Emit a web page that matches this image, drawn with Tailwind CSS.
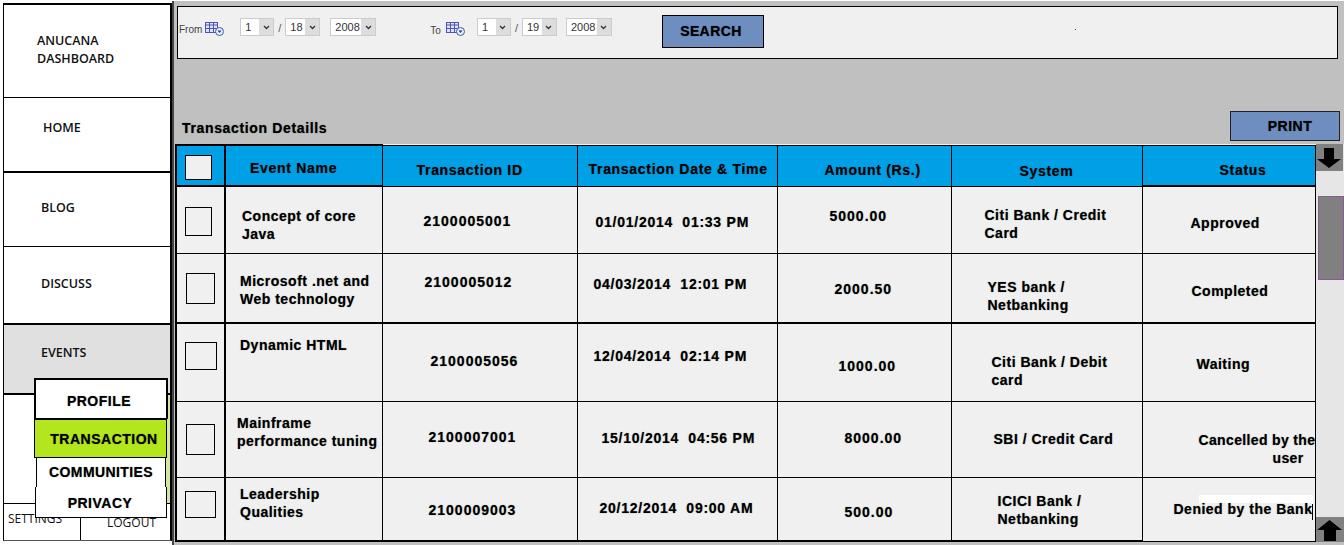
<!DOCTYPE html>
<html>
<head>
<meta charset="utf-8">
<script src="https://cdn.jsdelivr.net/npm/@tailwindcss/browser@4"></script>
<title>Transaction Details</title>
</head>
<body class="bg-white">
<div class="relative flex w-[1344px] h-[545px] overflow-hidden bg-white font-['Liberation_Sans',sans-serif] text-black">

    <!-- Sidebar -->
    <aside class="w-[172px] h-[545px] shrink-0 pt-[3px] pl-[3px] pb-[4px] font-['Open_Sans',sans-serif] text-[12.5px] font-semibold text-[#111]">
        <div class="flex flex-col h-[538px] border-l border-t-2 border-r-2 border-b border-black border-b-[#555]">
            <div class="h-[93px] border-b border-black pl-[33px] pt-[27px] leading-[18px]">ANUCANA<br>DASHBOARD</div>
            <div class="h-[75px] border-b-2 border-black pl-[39px] pt-[21px] leading-[18px]">HOME</div>
            <div class="h-[74px] border-b border-black pl-[37px] pt-[26px] leading-[18px]">BLOG</div>
            <div class="h-[78px] border-b-2 border-black pl-[37px] pt-[28px] leading-[18px]">DISCUSS</div>
            <div class="h-[70px] border-b-2 border-black bg-[#e0e0e0] pl-[37px] pt-[19px] leading-[18px]">EVENTS</div>
            <div class="h-[109px] border-b border-black"></div>
            <div class="flex flex-1 font-normal text-[12px]">
                <div class="w-[77px] border-r border-black pl-[4px] pt-[6px] leading-[18px]">SETTINGS</div>
                <div class="flex-1 pl-[26px] pt-[10px] leading-[18px]">LOGOUT</div>
            </div>
        </div>
    </aside>

    <!-- Main -->
    <main class="flex flex-col w-[1172px] h-[545px] mt-[1px] bg-[#c0c0c0] border-l-2 border-[#444] pl-[1px]">
        <div class="relative flex items-start w-[1161px] h-[53px] mt-[5px] ml-[2px] border border-black bg-[#f0f0f0] text-[11px] text-[#333]">
            <span class="ml-[1px] mt-[16px] text-[10px] leading-[14px] text-[#444]">From</span>
            <svg class="ml-[3px] mt-[14px]" width="19" height="16" viewBox="0 0 19 16">
                <rect x="0.5" y="1.5" width="12" height="10" fill="#dfe3f5" stroke="#4a57b5"/>
                <path d="M0 4h13M4.500 2v9M8.500 2v9M1 7.500h11" stroke="#4a57b5" fill="none"/>
                <circle cx="14.500" cy="10.500" r="4" fill="#e8edf8" stroke="#3a5fb0"/>
                <path d="M12.500 9.500h4l-2 2.500z" fill="#1d3f8f"/>
            </svg>
            <!-- from date -->
            <div class="flex items-center w-[34px] h-[18px] ml-[16px] mt-[11px] border border-[#ccc] bg-white"><span class="flex-1 pl-[4px]">1</span><span class="flex items-center justify-center w-[14px] h-full bg-[#ddd]"><svg width="7" height="5" viewBox="0 0 7 5"><path d="M1 1l2.500 2.500L6 1" stroke="#333" stroke-width="1.300" fill="none"/></svg></span></div>
            <span class="w-[11px] mt-[13px] text-center text-[#555]">/</span>
            <div class="flex items-center w-[35px] h-[18px] mt-[11px] border border-[#ccc] bg-white"><span class="flex-1 pl-[4px]">18</span><span class="flex items-center justify-center w-[14px] h-full bg-[#ddd]"><svg width="7" height="5" viewBox="0 0 7 5"><path d="M1 1l2.500 2.500L6 1" stroke="#333" stroke-width="1.300" fill="none"/></svg></span></div>
            <div class="flex items-center w-[46px] h-[18px] ml-[10px] mt-[11px] border border-[#ccc] bg-white"><span class="flex-1 pl-[4px]">2008</span><span class="flex items-center justify-center w-[14px] h-full bg-[#ddd]"><svg width="7" height="5" viewBox="0 0 7 5"><path d="M1 1l2.500 2.500L6 1" stroke="#333" stroke-width="1.300" fill="none"/></svg></span></div>
            <span class="ml-[54px] mt-[17px] text-[10px] leading-[14px] text-[#444]">To</span>
            <svg class="ml-[5px] mt-[14px]" width="19" height="16" viewBox="0 0 19 16">
                <rect x="0.5" y="1.5" width="12" height="10" fill="#dfe3f5" stroke="#4a57b5"/>
                <path d="M0 4h13M4.500 2v9M8.500 2v9M1 7.500h11" stroke="#4a57b5" fill="none"/>
                <circle cx="14.500" cy="10.500" r="4" fill="#e8edf8" stroke="#3a5fb0"/>
                <path d="M12.500 9.500h4l-2 2.500z" fill="#1d3f8f"/>
            </svg>
            <!-- to date -->
            <div class="flex items-center w-[34px] h-[18px] ml-[12px] mt-[11px] border border-[#ccc] bg-white"><span class="flex-1 pl-[4px]">1</span><span class="flex items-center justify-center w-[14px] h-full bg-[#ddd]"><svg width="7" height="5" viewBox="0 0 7 5"><path d="M1 1l2.500 2.500L6 1" stroke="#333" stroke-width="1.300" fill="none"/></svg></span></div>
            <span class="w-[11px] mt-[13px] text-center text-[#555]">/</span>
            <div class="flex items-center w-[35px] h-[18px] mt-[11px] border border-[#ccc] bg-white"><span class="flex-1 pl-[4px]">19</span><span class="flex items-center justify-center w-[14px] h-full bg-[#ddd]"><svg width="7" height="5" viewBox="0 0 7 5"><path d="M1 1l2.500 2.500L6 1" stroke="#333" stroke-width="1.300" fill="none"/></svg></span></div>
            <div class="flex items-center w-[46px] h-[18px] ml-[9px] mt-[11px] border border-[#ccc] bg-white"><span class="flex-1 pl-[4px]">2008</span><span class="flex items-center justify-center w-[14px] h-full bg-[#ddd]"><svg width="7" height="5" viewBox="0 0 7 5"><path d="M1 1l2.500 2.500L6 1" stroke="#333" stroke-width="1.300" fill="none"/></svg></span></div>
            <button class="w-[102px] h-[33px] ml-[50px] mt-[8px] border border-black bg-[#6d8ebf] pr-[4px] text-[14px] font-bold tracking-[0.4px] text-black [text-shadow:0_0_1px_rgba(0,0,0,0.6)]">SEARCH</button>
            <span class="w-[1px] h-[1px] ml-[311px] mt-[22px] bg-[#444]"></span>
        </div>

        <div class="flex items-start h-[85px]">
            <div class="ml-[7px] mt-[60px] text-[14px] font-bold tracking-[0.65px] leading-[18px] [text-shadow:0_0_1px_rgba(0,0,0,0.6)]">Transaction Detaills</div>
            <button class="w-[110px] h-[30px] ml-auto mr-[4px] mt-[52px] border border-[#222] bg-[#6d8ebf] pl-[10px] text-[14px] font-bold tracking-[0.5px] [text-shadow:0_0_1px_rgba(0,0,0,0.6)]">PRINT</button>
        </div>

        <div class="flex">
            <table class="w-[1139px] table-fixed border-collapse text-[14px] font-bold tracking-[0.5px] leading-[18px] bg-[#f0f0f0] [text-shadow:0_0_1px_rgba(0,0,0,0.5)]">
                <colgroup>
                    <col class="w-[49px]"><col class="w-[157px]"><col class="w-[195px]"><col class="w-[200px]"><col class="w-[174px]"><col class="w-[191px]"><col class="w-[173px]">
                </colgroup>
                <thead class="tracking-[0.7px]">
                    <tr class="h-[41px] bg-[#00a0e6] text-left">
                        <th class="border-2 border-black pl-[8px] align-top pt-[9px]"><div class="w-[27px] h-[25px] border border-black bg-[#f0f0f0]"></div></th>
                        <th class="border-2 border-black border-r-1 align-top font-bold pl-[24px] pt-[13px]">Event Name</th>
                        <th class="border border-black align-top font-bold pl-[34px] pt-[15px]">Transaction ID</th>
                        <th class="border border-black align-top font-bold pl-[11px] pt-[14px] whitespace-nowrap">Transaction Date &amp; Time</th>
                        <th class="border border-black align-top font-bold pl-[47px] pt-[15px]">Amount (Rs.)</th>
                        <th class="border border-black align-top font-bold pl-[68px] pt-[16px]">System</th>
                        <th class="border border-black border-b-2 align-top font-bold pl-[77px] pt-[15px]">Status</th>
                    </tr>
                </thead>
                <tbody>
                    <tr class="h-[67px]">
                        <td class="border border-x-2 border-black align-top pl-[8px] pt-[20px]"><div class="w-[27px] h-[29px] border border-black"></div></td>
                        <td class="border border-l-2 border-black align-top pl-[16px] pt-[20px]">Concept of core<br>Java</td>
                        <td class="border border-black align-top pl-[41px] pt-[25px] tracking-[1px]">2100005001</td>
                        <td class="border border-black align-top pl-[18px] pt-[26px] tracking-[0.75px] whitespace-nowrap">01/01/2014&nbsp; 01:33 PM</td>
                        <td class="border border-black align-top pl-[52px] pt-[20px] tracking-[1px]">5000.00</td>
                        <td class="border border-black align-top pl-[33px] pt-[19px]">Citi Bank / Credit<br>Card</td>
                        <td class="border border-black align-top pl-[48px] pt-[27px]">Approved</td>
                    </tr>
                    <tr class="h-[69px]">
                        <td class="border border-x-2 border-b-2 border-black align-top pl-[9px] pt-[19px]"><div class="w-[29px] h-[31px] border border-black"></div></td>
                        <td class="border border-l-2 border-b-2 border-black align-top pl-[14px] pt-[18px]">Microsoft .net and<br>Web technology</td>
                        <td class="border border-b-2 border-black align-top pl-[42px] pt-[19px] tracking-[1px]">2100005012</td>
                        <td class="border border-b-2 border-black align-top pl-[16px] pt-[21px] tracking-[0.75px] whitespace-nowrap">04/03/2014&nbsp; 12:01 PM</td>
                        <td class="border border-b-2 border-black align-top pl-[57px] pt-[26px] tracking-[1px]">2000.50</td>
                        <td class="border border-b-2 border-black align-top pl-[36px] pt-[24px]">YES bank /<br>Netbanking</td>
                        <td class="border border-b-2 border-black align-top pl-[49px] pt-[28px]">Completed</td>
                    </tr>
                    <tr class="h-[78px]">
                        <td class="border border-x-2 border-black align-top pl-[8px] pt-[18px]"><div class="w-[32px] h-[28px] border border-black"></div></td>
                        <td class="border border-l-2 border-black align-top pl-[14px] pt-[12px]">Dynamic HTML</td>
                        <td class="border border-black align-top pl-[48px] pt-[28px] tracking-[1px]">2100005056</td>
                        <td class="border border-black align-top pl-[16px] pt-[23px] tracking-[0.75px] whitespace-nowrap">12/04/2014&nbsp; 02:14 PM</td>
                        <td class="border border-black align-top pl-[61px] pt-[33px] tracking-[1px]">1000.00</td>
                        <td class="border border-black align-top pl-[40px] pt-[29px]">Citi Bank / Debit<br>card</td>
                        <td class="border border-black align-top pl-[54px] pt-[31px]">Waiting</td>
                    </tr>
                    <tr class="h-[75px]">
                        <td class="border border-x-2 border-black align-top pl-[9px] pt-[22px]"><div class="w-[29px] h-[31px] border border-black"></div></td>
                        <td class="border border-l-2 border-black align-top pl-[11px] pt-[12px] whitespace-nowrap">Mainframe<br>performance tuning</td>
                        <td class="border border-black align-top pl-[46px] pt-[26px] tracking-[1px]">2100007001</td>
                        <td class="border border-black align-top pl-[24px] pt-[27px] tracking-[0.75px] whitespace-nowrap">15/10/2014&nbsp; 04:56 PM</td>
                        <td class="border border-black align-top pl-[67px] pt-[27px] tracking-[1px]">8000.00</td>
                        <td class="border border-black align-top pl-[42px] pt-[28px] whitespace-nowrap">SBI / Credit Card</td>
                        <td class="border border-black align-top pl-[56px] pt-[29px] tracking-[0.35px] whitespace-nowrap">Cancelled by the<br><span class="pl-[74px]">user</span></td>
                    </tr>
                    <tr class="h-[63px]">
                        <td class="border border-x-2 border-b-2 border-black align-top pl-[8px] pt-[13px]"><div class="w-[31px] h-[27px] border border-black"></div></td>
                        <td class="border border-l-2 border-b-2 border-black align-top pl-[14px] pt-[7px]">Leadership<br>Qualities</td>
                        <td class="border border-b-2 border-black align-top pl-[46px] pt-[23px] tracking-[1px]">2100009003</td>
                        <td class="border border-b-2 border-black align-top pl-[22px] pt-[21px] tracking-[0.75px] whitespace-nowrap">20/12/2014&nbsp; 09:00 AM</td>
                        <td class="border border-b-2 border-black align-top pl-[67px] pt-[25px] tracking-[1px]">500.00</td>
                        <td class="border border-b-2 border-black align-top pl-[46px] pt-[14px]">ICICI Bank /<br>Netbanking</td>
                        <td class="relative border border-black align-top pl-[31px] pt-[22px] whitespace-nowrap">
                            <span class="absolute left-[56px] right-[2px] top-[17px] h-[8px] bg-white"></span>
                            <span class="relative">Denied by the Bank</span>
                            <span class="absolute right-[2px] top-[26px] w-[1px] h-[16px] bg-black"></span>
                        </td>
                    </tr>
                </tbody>
            </table>

            <!-- Scrollbar -->
            <div class="flex flex-col w-[28px] h-[398px] bg-[#e6e6e6]">
                <div class="flex items-center justify-center w-[27px] h-[27px] bg-[#808080]">
                    <svg width="26" height="22" viewBox="0 0 26 22"><path d="M8 1h10v11h7L13 21 1 12h7z" fill="#000"/></svg>
                </div>
                <div class="w-[26px] h-[84px] mt-[25px] ml-[2px] border border-[#8a5a94] bg-[#808080]"></div>
                <div class="flex items-center justify-center w-[28px] h-[25px] mt-[237px] bg-[#808080]">
                    <svg width="27" height="22" viewBox="0 0 27 22"><path d="M13.500 1 26 11h-6v11H8V11H1z" fill="#000"/></svg>
                </div>
            </div>
        </div>
    </main>

    <!-- Events flyout -->
    <div class="absolute left-[166px] top-[395px] w-[4px] h-[108px] bg-[#d5e6a0]"></div>
    <div class="absolute left-[34px] top-[378px] w-[134px] text-[14px] font-bold tracking-[0.5px] text-center [text-shadow:0_0_1px_rgba(0,0,0,0.5)]">
        <div class="h-[41px] border-2 border-b-1 border-black bg-white pt-[12px] pr-[4px] leading-[18px]">PROFILE</div>
        <div class="w-[133px] h-[39px] border border-black bg-[#b4e61e] pt-[10px] pl-[7px] leading-[18px]">TRANSACTION</div>
        <div class="w-[130px] h-[31px] ml-[2px] -mt-[1px] border border-black bg-white pt-[5px] leading-[18px] tracking-[0.4px]">COMMUNITIES</div>
        <div class="w-[132px] h-[31px] ml-[1px] -mt-[1px] border border-t-0 border-black bg-white pt-[7px] pr-[2px] leading-[18px]">PRIVACY</div>
    </div>
</div>
</body>
</html>
